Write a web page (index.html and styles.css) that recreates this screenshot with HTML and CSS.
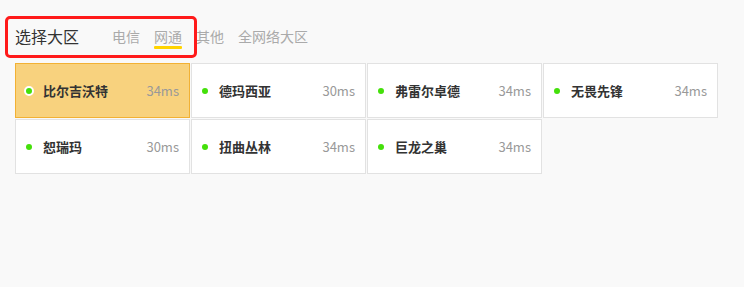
FILE: index.html
```html
<!DOCTYPE html>
<html lang="zh">
<head>
<meta charset="utf-8">
<link rel="stylesheet" href="styles.css">
</head>
<body>
<div class="page">
  <div class="header">
    <div class="title">选择大区</div>
    <div class="tabs">
      <span class="tab">电信</span>
      <span class="tab active">网通</span>
      <span class="tab">其他</span>
      <span class="tab">全网络大区</span>
    </div>
    <div class="mark"></div>
  </div>
  <div class="grid">
    <div class="card selected"><span class="dot"></span><span class="name">比尔吉沃特</span><span class="ping">34ms</span></div>
    <div class="card"><span class="dot"></span><span class="name">德玛西亚</span><span class="ping">30ms</span></div>
    <div class="card"><span class="dot"></span><span class="name">弗雷尔卓德</span><span class="ping">34ms</span></div>
    <div class="card"><span class="dot"></span><span class="name">无畏先锋</span><span class="ping">34ms</span></div>
    <div class="card"><span class="dot"></span><span class="name">恕瑞玛</span><span class="ping">30ms</span></div>
    <div class="card"><span class="dot"></span><span class="name">扭曲丛林</span><span class="ping">34ms</span></div>
    <div class="card"><span class="dot"></span><span class="name">巨龙之巢</span><span class="ping">34ms</span></div>
  </div>
</div>
</body>
</html>
```

FILE: styles.css
```css
html, body {
  margin: 0;
  padding: 0;
  background: #f9f9f9;
}
body {
  width: 744px;
  height: 287px;
  overflow: hidden;
  font-family: "Noto Sans CJK SC", "Noto Sans", sans-serif;
}
.page {
  padding: 24px 0 0 15px;
}
.header {
  position: relative;
  display: flex;
  align-items: center;
  height: 24px;
}
.title {
  font-size: 16px;
  line-height: 24px;
  color: #333;
  width: 97px;
}
.tabs {
  display: flex;
  gap: 14px;
}
.tab {
  position: relative;
  font-size: 14px;
  line-height: 24px;
  color: #aaa;
}
.tab.active::after {
  content: "";
  position: absolute;
  left: 0;
  right: 0;
  bottom: -1px;
  height: 3px;
  background: #ffd400;
  border-radius: 1px;
}
.mark {
  position: absolute;
  left: -10px;
  top: -8px;
  width: 186px;
  height: 36px;
  border: 3px solid #ff1a1a;
  border-radius: 5px;
}
.grid {
  margin-top: 15px;
  display: grid;
  grid-template-columns: repeat(4, 175px);
  grid-auto-rows: 55px;
  gap: 1px;
}
.card {
  box-sizing: border-box;
  display: flex;
  align-items: center;
  background: #fff;
  border: 1px solid #e2e2e2;
  padding: 0 10px 0 9px;
}
.card.selected {
  background: #f8d27e;
  border-color: #f2b134;
}
.dot {
  width: 6px;
  height: 6px;
  border-radius: 50%;
  background: #44e00a;
  margin-left: 1px;
  margin-right: 11px;
  box-sizing: content-box;
}
.card.selected .dot {
  border: 2px solid #fff;
  margin-left: -1px;
  margin-right: 9px;
}
.name {
  flex: 1;
  font-size: 13px;
  font-weight: bold;
  color: #333;
}
.ping {
  font-size: 13px;
  color: #999;
}
```
